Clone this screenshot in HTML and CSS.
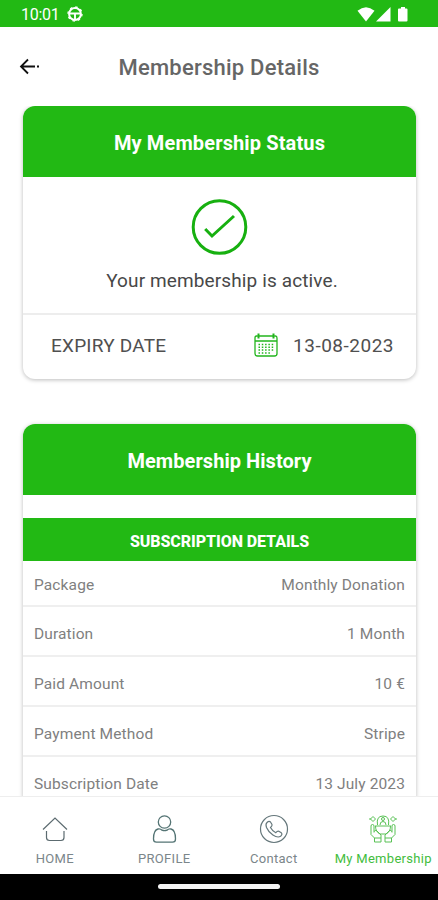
FILE: index.html
```html
<!DOCTYPE html>
<html lang="en">
<head>
<meta charset="utf-8">
<title>Membership Details</title>
<link rel="stylesheet" href="styles.css">
</head>
<body>
<div class="phone">
  <header class="status">
    <span class="clock">10:01</span>
    <svg class="wheel" width="16" height="16" viewBox="0 0 16 16" fill="none" stroke="#fff"><circle cx="8" cy="8" r="5.900" stroke-width="2"/><circle cx="8" cy="8" r="7" stroke-width="1.400" stroke-dasharray="2.400 3.100"/><path d="M2.500 7.500h11M8 8v5" stroke-width="1.900"/></svg>
    <svg class="signals" width="52" height="18" viewBox="0 0 52 18" fill="#fff"><path d="M.5 4.800Q9 -2.500 17.500 4.800L9 15.500Z"/><path d="M33.500 1v14.500H19Z"/><path d="M42 2.500h2V1h4v1.500h1.500q1 0 1 1v11q0 1-1 1H42q-1 0-1-1v-11q0-1 1-1Z"/></svg>
  </header>
  <div class="topbar">
    <svg class="back" width="22" height="18" viewBox="0 0 22 18" fill="none" stroke="#111" stroke-width="1.800"><path d="M9 1.500L2 8.500l7 7M2 8.500H16M18 8.500h2"/></svg>
    <h1>Membership Details</h1>
  </div>
  <main>
    <section class="card status-card">
      <h2 class="wide"><span>My Membership Status</span></h2>
      <div class="state">
        <svg width="58" height="58" viewBox="0 0 58 58" fill="none" stroke="#17b010"><circle cx="28.500" cy="29" r="26.300" stroke-width="3"/><path d="M14.200 31l6.800 7L43 18" stroke-width="3"/></svg>
        <p>Your membership is active.</p>
      </div>
      <div class="expiry">
        <span class="label">EXPIRY DATE</span>
        <svg class="calendar" width="24" height="24" viewBox="0 0 24 24" fill="none" stroke="#22b51d"><path d="M3.500 3H2.500Q1 3 1 5v15.500Q1 23 3.500 23h17Q23 23 23 20.500V5q0-2-1.500-2h-1M1 8h22" stroke-width="1.300"/><path d="M3.500 3h17" stroke-width="1.700"/><path d="M4.500.5v5M19.500.5v5" stroke-width="2"/><path d="M4.500 11.500h16M4.500 14.300h16M4.500 17.100h16M4.500 19.900h13" stroke-width="1.500" stroke-dasharray="1.500 1.800"/></svg>
        <span class="date">13-08-2023</span>
      </div>
    </section>
    <section class="card history">
      <h2><span>Membership History</span></h2>
      <h3><span>SUBSCRIPTION DETAILS</span></h3>
      <dl>
        <div><dt>Package</dt><dd>Monthly Donation</dd></div>
        <div><dt>Duration</dt><dd>1 Month</dd></div>
        <div><dt>Paid Amount</dt><dd>10 €</dd></div>
        <div><dt>Payment Method</dt><dd>Stripe</dd></div>
        <div><dt>Subscription Date</dt><dd>13 July 2023</dd></div>
      </dl>
    </section>
  </main>
  <nav>
    <a><svg width="30" height="30" viewBox="0 0 30 30" fill="none" stroke="#5c6b70" stroke-width="1.200"><path d="M3 15.500L15 4l12 11.500M6.500 17v6.500q0 3 3 3h11.500q3 0 3-3V17"/></svg><span>HOME</span></a>
    <a><svg width="30" height="30" viewBox="0 0 30 30" fill="none" stroke="#547474" stroke-width="1.300"><circle cx="15.500" cy="8" r="6.200"/><path d="M9 15q-4.500 1-4.500 10 0 3.200 3 3.200h16q3 0 3-3.200 0-9-4.500-10-2.500-.5-4 1.200-2.500 1-5 0-1.500-1.700-4-1.200Z"/></svg><span>PROFILE</span></a>
    <a><svg width="30" height="30" viewBox="0 0 30 30" fill="none" stroke="#65777b" stroke-width="1.200"><circle cx="15" cy="15" r="13.500"/><path d="M8 8.500q2-2 3.500-.5l1.500 2.500q.5 1.300-1.500 3 2 3.800 5.300 5.200 1.700-2 3-1.500l2.500 1.600q1.500 1.500-.7 3.500-3 1.900-7.700-1.300-4.500-3-6.400-7.500-1.200-3.500.5-5Z"/></svg><span>Contact</span></a>
    <a class="active"><svg width="30" height="30" viewBox="0 0 30 30" fill="none" stroke="#58c154" stroke-width="1"><path d="M9.500 11q-1.500-9 5.500-9t5.500 9M2.500 5L5 2.500 7.500 5 5 7.500ZM22.500 5L25 2.500 27.500 5 25 7.500ZM1 5h2M27 5h2M12 11q0-3.500 3-3.500t3 3.500M7 12h16M3 12q0-1.500 1.500-1.500T6 12v6.500M3 12v8.500L6.500 24M27 12q0-1.500-1.500-1.500T24 12v6.500M27 12v8.500L23.500 24M7.500 12q0 6 4.500 8h6q4.500-2 4.500-8M6 17.500l2-1.500 5 5v3M24 17.500l-2-1.500-5 5v3M6.500 24H13v4H6.500ZM17 24h6.500v4H17Z"/><circle cx="15" cy="5" r="1.500"/></svg><span>My Membership</span></a>
  </nav>
  <footer><i></i></footer>
</div>
</body>
</html>
```

FILE: styles.css
```css
* { box-sizing: border-box; margin: 0; padding: 0; }
body { width: 438px; height: 900px; overflow: hidden; background: #fff; font-family: Roboto, sans-serif; }
.phone { display: flex; flex-direction: column; height: 900px; overflow: hidden; }
svg { flex: none; display: block; }
.status { height: 27px; flex: none; display: flex; align-items: center; padding: 0 29px 0 21px; background: #22b914; color: #fff; }
.clock { font-size: 16px; letter-spacing: -.3px; width: 46px; padding-top: 2px; }
.signals { margin-left: auto; margin-top: 3px; }
.topbar { height: 79px; flex: none; display: grid; grid-template-columns: 40px 1fr 40px; align-items: center; padding: 0 19px; }
h1 { font-size: 22px; font-weight: 500; letter-spacing: .23px; color: #666; text-align: center; white-space: nowrap; padding-top: 2px; }
main { flex: 1; min-height: 0; overflow: hidden; padding: 0 22px 0 23px; display: flex; flex-direction: column; gap: 45px; }
.card { flex: none; border-radius: 12px; background: #fff; box-shadow: 0 1px 4px #0004; overflow: hidden; }
h2 { height: 71px; display: flex; align-items: center; justify-content: center; padding-top: 3px; color: #fff; background: #22b914; font-size: 20px; font-weight: 700; white-space: nowrap; letter-spacing: .06px; }
h2.wide { letter-spacing: .13px; }
.status-card { height: 273px; }
.state { height: 138px; border-bottom: 2px solid #ededed; display: flex; flex-direction: column; align-items: center; padding-top: 21px; }
.state p { font-size: 19px; line-height: 24px; letter-spacing: .12px; margin: 13px 0 0 5px; color: #484848; }
.expiry { height: 60px; display: flex; align-items: center; padding: 0 22px 0 28px; font-size: 19px; color: #505050; }
.label { letter-spacing: .22px; }
.calendar { margin: 0 15px 0 auto; }
.date { font-size: 19px; letter-spacing: .5px; }
h3 { height: 43px; margin-top: 23px; display: flex; align-items: center; justify-content: center; padding-top: 3px; background: #22b914; color: #fff; font-size: 16px; font-weight: 800; letter-spacing: -.07px; }
dl div { height: 50px; border-bottom: 2px solid #efefef; padding: 5px 11px 0 11px; display: flex; align-items: center; justify-content: space-between; font-size: 15.5px; font-weight: 400; color: #808080; letter-spacing: .12px; }
dl div:first-child { height: 46px; padding-top: 3px; }
nav { height: 78px; flex: none; display: grid; grid-template-columns: repeat(4, 1fr); border-top: 1px solid #eee; background: #fff; }
nav a { display: flex; flex-direction: column; align-items: center; padding-top: 17px; font-size: 13px; line-height: 16px; color: #7b868a; letter-spacing: .3px; white-space: nowrap; }
nav span { margin-top: 7px; }
nav .active { color: #43bd3d; }
footer { height: 26px; flex: none; background: #000; display: flex; justify-content: center; padding-top: 10px; }
footer i { width: 122px; height: 5px; border-radius: 3px; background: #f4f4f4; }
```
